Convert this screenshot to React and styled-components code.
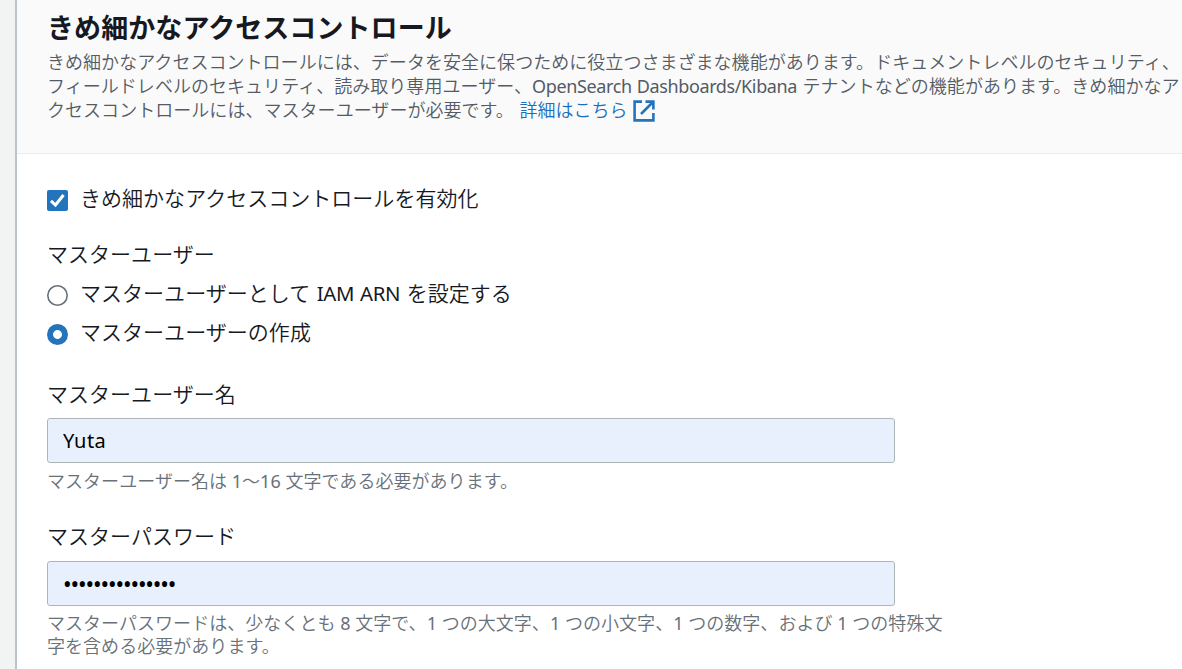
import React from "react";
import styled, { createGlobalStyle } from "styled-components";

const GlobalStyle = createGlobalStyle`
  *, *::before, *::after { box-sizing: border-box; }
  body {
    margin: 0;
    overflow: hidden;
    background: #f2f3f3;
    color: #16191f;
    font-family: "Noto Sans", "Noto Sans CJK JP", sans-serif;
  }
`;

const Page = styled.div`
  display: flex;
  height: 669px;
  padding-left: 15px;
  overflow: hidden;
`;

const Panel = styled.section`
  flex: 1;
  min-width: 0;
  background: #fff;
  border-left: 2px solid #bdc4c9;
`;

const PanelHeader = styled.header`
  height: 154px;
  padding: 9px 0 0 30px;
  background: #fafafa;
  border-bottom: 1px solid #eaeded;
`;

const Title = styled.h2`
  margin: 0;
  font-family: "Noto Sans CJK JP", sans-serif;
  font-size: 27px;
  line-height: 36px;
  font-weight: 700;
  letter-spacing: 0.08px;
  white-space: nowrap;
`;

const Description = styled.p`
  margin: 5px 0 0;
  color: #545b64;
  font-size: 18px;
  line-height: 24px;
  font-weight: 350;
  letter-spacing: 0.04px;
  word-spacing: 0.8px;
  white-space: nowrap;
`;

const Line = styled.span`
  display: block;
  height: ${(p) => p.$height || 24}px;
`;

const Latin = styled.span`
  font-weight: 400;
  font-size: ${(p) => p.$size || 1}em;
  letter-spacing: ${(p) => p.$spacing || 0}px;
`;

const MoreLink = styled.a`
  color: #1a6fbd;
  text-decoration: none;
`;

const ExternalIcon = styled.svg`
  width: 22px;
  height: 22px;
  margin-left: 5px;
  vertical-align: -5px;
`;

const PanelBody = styled.div`
  padding: 30px 0 0 30px;
`;

const Option = styled.label`
  display: flex;
  align-items: center;
  gap: 12px;
  height: ${(p) => p.$height || 39}px;
`;

const OptionText = styled.span`
  font-size: 21px;
  line-height: 30px;
  font-weight: 350;
  letter-spacing: 0.03px;
  word-spacing: 1px;
  white-space: nowrap;
  padding-bottom: ${(p) => p.$lift || 4}px;
`;

const CheckMark = styled.span`
  display: grid;
  place-items: center;
  width: 21px;
  height: 21px;
  border-radius: 2px;
  background: #2374bd;
`;

const Radio = styled.span`
  width: 21px;
  height: 21px;
  border-radius: 50%;
  background: ${(p) => (p.$checked ? "radial-gradient(circle, #fff 4px, #2374bd 4.8px)" : "#fff")};
  box-shadow: ${(p) => (p.$checked ? "none" : "inset 0 0 0 1.6px #687078")};
`;

const Label = styled.div`
  margin-top: ${(p) => p.$top}px;
  height: 30px;
  font-size: 21px;
  line-height: 30px;
  font-weight: 350;
  letter-spacing: 0.03px;
`;

const Input = styled.input`
  display: block;
  width: 848px;
  height: 45px;
  margin-top: ${(p) => p.$top}px;
  padding: ${(p) => (p.type === "password" ? "1px 15px 0" : "0 15px")};
  border: 1px solid #aab7b8;
  border-radius: 3px;
  outline: none;
  background: #e8f0fe;
  color: #000;
  font-family: "Noto Sans", sans-serif;
  font-size: ${(p) => (p.type === "password" ? 23 : 20)}px;
  letter-spacing: ${(p) => (p.type === "password" ? "-1.16px" : "0.4px")};
`;

const Hint = styled.div`
  margin-top: ${(p) => p.$top}px;
  color: #687078;
  font-size: 18px;
  line-height: 23px;
  font-weight: 350;
  letter-spacing: 0.04px;
  white-space: nowrap;
`;

export default function App() {
  return (
    <>
      <GlobalStyle />
      <Page>
        <Panel>
          <PanelHeader>
            <Title>きめ細かなアクセスコントロール</Title>
            <Description>
              <Line>きめ細かなアクセスコントロールには、データを安全に保つために役立つさまざまな機能があります。ドキュメントレベルのセキュリティ、</Line>
              <Line>
                フィールドレベルのセキュリティ、読み取り専用ユーザー、<Latin $spacing={-0.38}>OpenSearch Dashboards/Kibana</Latin> テナントなどの機能があります。きめ細かなア
              </Line>
              <Line>
                クセスコントロールには、マスターユーザーが必要です。{" "}
                <MoreLink>
                  詳細はこちら
                  <ExternalIcon viewBox="0 0 22 22" fill="none" stroke="#2374bd" strokeWidth="2.6">
                    <path d="M9 1.6H1.6v18.8h18.8V13" />
                    <path d="M12.5 1.6h7.9v7.9M20 2 8 14" />
                  </ExternalIcon>
                </MoreLink>
              </Line>
            </Description>
          </PanelHeader>
          <PanelBody>
            <Option $height={33}>
              <CheckMark>
                <svg width="21" height="21" viewBox="0 0 21 21" fill="none" stroke="#fff" strokeWidth="3">
                  <path d="M4 10.8 8.5 15 16.5 5" />
                </svg>
              </CheckMark>
              <OptionText $lift={6}>きめ細かなアクセスコントロールを有効化</OptionText>
            </Option>
            <Label $top={22}>マスターユーザー</Label>
            <Option $height={52}>
              <Radio />
              <OptionText>
                マスターユーザーとして <Latin $size={0.97} $spacing={-0.35}>IAM ARN</Latin> を設定する
              </OptionText>
            </Option>
            <Option $height={27}>
              <Radio $checked />
              <OptionText $lift={6}>マスターユーザーの作成</OptionText>
            </Option>
            <Label $top={31}>マスターユーザー名</Label>
            <Input type="text" defaultValue="Yuta" $top={9} />
            <Hint $top={7}>
              マスターユーザー名は <Latin>1</Latin>～<Latin>16</Latin> 文字である必要があります。
            </Hint>
            <Label $top={28}>マスターパスワード</Label>
            <Input type="password" defaultValue="passwordpasswor" $top={10} />
            <Hint $top={6}>
              <Line $height={23}>
                マスターパスワードは、少なくとも <Latin>8</Latin> 文字で、<Latin>1</Latin> つの大文字、<Latin>1</Latin> つの小文字、<Latin>1</Latin> つの数字、および <Latin>1</Latin> つの特殊文
              </Line>
              <Line $height={23}>字を含める必要があります。</Line>
            </Hint>
          </PanelBody>
        </Panel>
      </Page>
    </>
  );
}
